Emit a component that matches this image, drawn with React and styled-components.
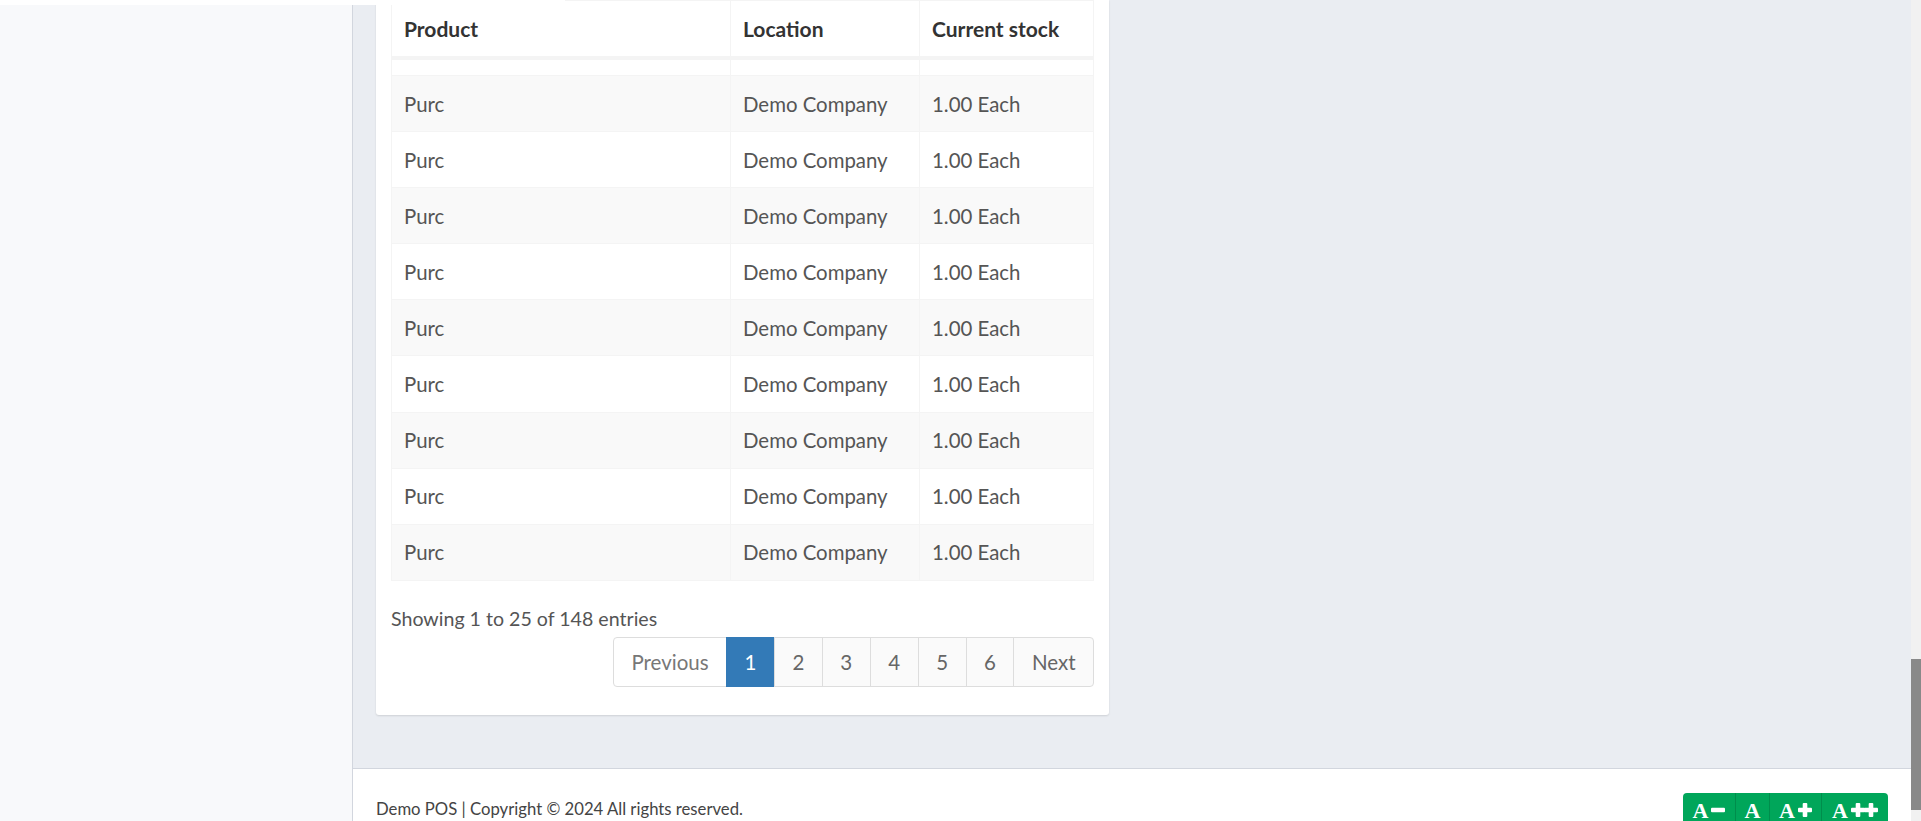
import React from "react";
import styled, { createGlobalStyle } from "styled-components";

const GlobalStyle = createGlobalStyle`
  html, body {
    margin: 0;
    padding: 0;
    height: 100%;
    overflow: hidden;
  }
  body {
    font-family: Lato, "Liberation Sans", sans-serif;
    color: #555;
    background: #fff;
  }
`;

const Shell = styled.div`
  position: relative;
  display: flex;
  height: 100vh;
  overflow: hidden;
`;

const TopEdge = styled.div`
  position: absolute;
  top: 0;
  left: 0;
  width: 565px;
  height: 5px;
  background: #fff;
  z-index: 2;
`;

const Sidebar = styled.aside`
  flex: none;
  width: 352px;
  background: #f8f9fb;
  border-right: 1px solid #d2d6de;
`;

const Column = styled.div`
  flex: 1;
  min-width: 0;
  display: flex;
  flex-direction: column;
`;

const Main = styled.main`
  flex: none;
  background: #eaedf2;
  padding: 0 0 53px 23px;
`;

const Card = styled.section`
  box-sizing: border-box;
  width: 733px;
  padding: 0 15px 28px;
  background: #fff;
  border-radius: 0 0 3px 3px;
  box-shadow: 0 1px 2px rgba(0, 0, 0, 0.12);
`;

const Table = styled.table`
  width: 703px;
  table-layout: fixed;
  border-collapse: separate;
  border-spacing: 0;
  border-top: 1px solid #f4f4f4;
  border-left: 1px solid #f4f4f4;
  font-size: 20.4px;
`;

const Th = styled.th`
  height: 55px;
  padding: 0 12px;
  text-align: left;
  font-size: 21px;
  font-weight: 700;
  color: #333;
  border-right: 1px solid #f4f4f4;
  border-bottom: 4px solid #f4f4f4;
  white-space: nowrap;
`;

const Td = styled.td`
  height: ${(p) => (p.$sizer ? "15px" : "55.1px")};
  padding: 0 12px;
  color: #555;
  border-right: 1px solid #f4f4f4;
  border-bottom: 1px solid #f4f4f4;
  white-space: nowrap;
`;

const Row = styled.tr`
  background: ${(p) => (p.$striped ? "#f9f9f9" : "#fff")};
`;

const Info = styled.div`
  margin-top: 23px;
  font-size: 19.6px;
  line-height: 30px;
  color: #555;
`;

const Pager = styled.div`
  display: flex;
  justify-content: flex-end;
  margin-top: 3px;
`;

const PageButton = styled.span`
  box-sizing: border-box;
  display: flex;
  align-items: center;
  height: 50px;
  padding: 0 17.5px;
  margin-left: -1px;
  font-size: 20.5px;
  border: 1px solid ${(p) => (p.$active ? "#337ab7" : "#ddd")};
  background: ${(p) => (p.$active ? "#337ab7" : p.$disabled ? "#fff" : "#fafafa")};
  color: ${(p) => (p.$active ? "#fff" : p.$disabled ? "#777" : "#666")};
  &:first-child {
    border-radius: 4px 0 0 4px;
  }
  &:last-child {
    border-radius: 0 4px 4px 0;
  }
`;

const Footer = styled.footer`
  flex: 1;
  display: flex;
  justify-content: space-between;
  align-items: flex-start;
  padding: 24px 23px 0 23px;
  background: #fff;
  border-top: 1px solid #d2d6de;
  overflow: hidden;
`;

const FooterText = styled.div`
  margin-top: 3px;
  font-size: 16.7px;
  line-height: 26px;
  color: #444;
`;

const FontSizer = styled.div`
  display: flex;
  height: 36px;
  background: #00a65a;
  border-radius: 4px 4px 0 0;
`;

const SizeButton = styled.span`
  display: flex;
  align-items: center;
  justify-content: center;
  gap: 3px;
  width: ${(p) => p.$w}px;
  color: #fff;
  font-family: "Liberation Serif", serif;
  font-weight: 700;
  font-size: 22px;
  & + & {
    border-left: 1px solid #008d4c;
  }
`;

const Glyph = styled.svg`
  display: block;
  margin-top: -2px;
  fill: #fff;
`;

const Minus = () => (
  <Glyph width="14" height="14" viewBox="0 0 14 14">
    <rect x="0" y="4.7" width="14" height="4.6" rx="1" />
  </Glyph>
);

const Plus = ({ count = 1 }) => (
  <Glyph width={count * 14 - (count - 1)} height="14" viewBox={`0 0 ${count * 14 - (count - 1)} 14`}>
    {Array.from({ length: count }, (_, i) => (
      <g key={i} transform={`translate(${i * 13} 0)`}>
        <rect x="0" y="4.7" width="14" height="4.6" rx="1" />
        <rect x="4.7" y="0" width="4.6" height="14" rx="1" />
      </g>
    ))}
  </Glyph>
);

const ScrollRail = styled.div`
  flex: none;
  width: 10px;
  background: #f1f1f1;
`;

const ScrollThumb = styled.div`
  margin-top: 659px;
  height: 151px;
  background: #898989;
`;

const rows = Array.from({ length: 9 }, () => ({
  product: "Purc",
  location: "Demo Company",
  stock: "1.00 Each",
}));

const pages = ["1", "2", "3", "4", "5", "6"];

export default function App() {
  return (
    <>
      <GlobalStyle />
      <Shell>
        <TopEdge />
        <Sidebar />
        <Column>
          <Main>
            <Card>
              <Table>
                <colgroup>
                  <col style={{ width: 339 }} />
                  <col style={{ width: 189 }} />
                  <col style={{ width: 174 }} />
                </colgroup>
                <thead>
                  <tr>
                    <Th>Product</Th>
                    <Th>Location</Th>
                    <Th>Current stock</Th>
                  </tr>
                </thead>
                <tbody>
                  <Row>
                    <Td $sizer />
                    <Td $sizer />
                    <Td $sizer />
                  </Row>
                  {rows.map((r, i) => (
                    <Row key={i} $striped={i % 2 === 0}>
                      <Td>{r.product}</Td>
                      <Td>{r.location}</Td>
                      <Td>{r.stock}</Td>
                    </Row>
                  ))}
                </tbody>
              </Table>
              <Info>Showing 1 to 25 of 148 entries</Info>
              <Pager>
                <PageButton $disabled>Previous</PageButton>
                {pages.map((p) => (
                  <PageButton key={p} $active={p === "1"}>
                    {p}
                  </PageButton>
                ))}
                <PageButton>Next</PageButton>
              </Pager>
            </Card>
          </Main>
          <Footer>
            <FooterText>Demo POS | Copyright © 2024 All rights reserved.</FooterText>
            <FontSizer>
              <SizeButton $w={52}>
                A<Minus />
              </SizeButton>
              <SizeButton $w={33}>A</SizeButton>
              <SizeButton $w={51}>
                A<Plus />
              </SizeButton>
              <SizeButton $w={66}>
                A<Plus count={2} />
              </SizeButton>
            </FontSizer>
          </Footer>
        </Column>
        <ScrollRail>
          <ScrollThumb />
        </ScrollRail>
      </Shell>
    </>
  );
}
